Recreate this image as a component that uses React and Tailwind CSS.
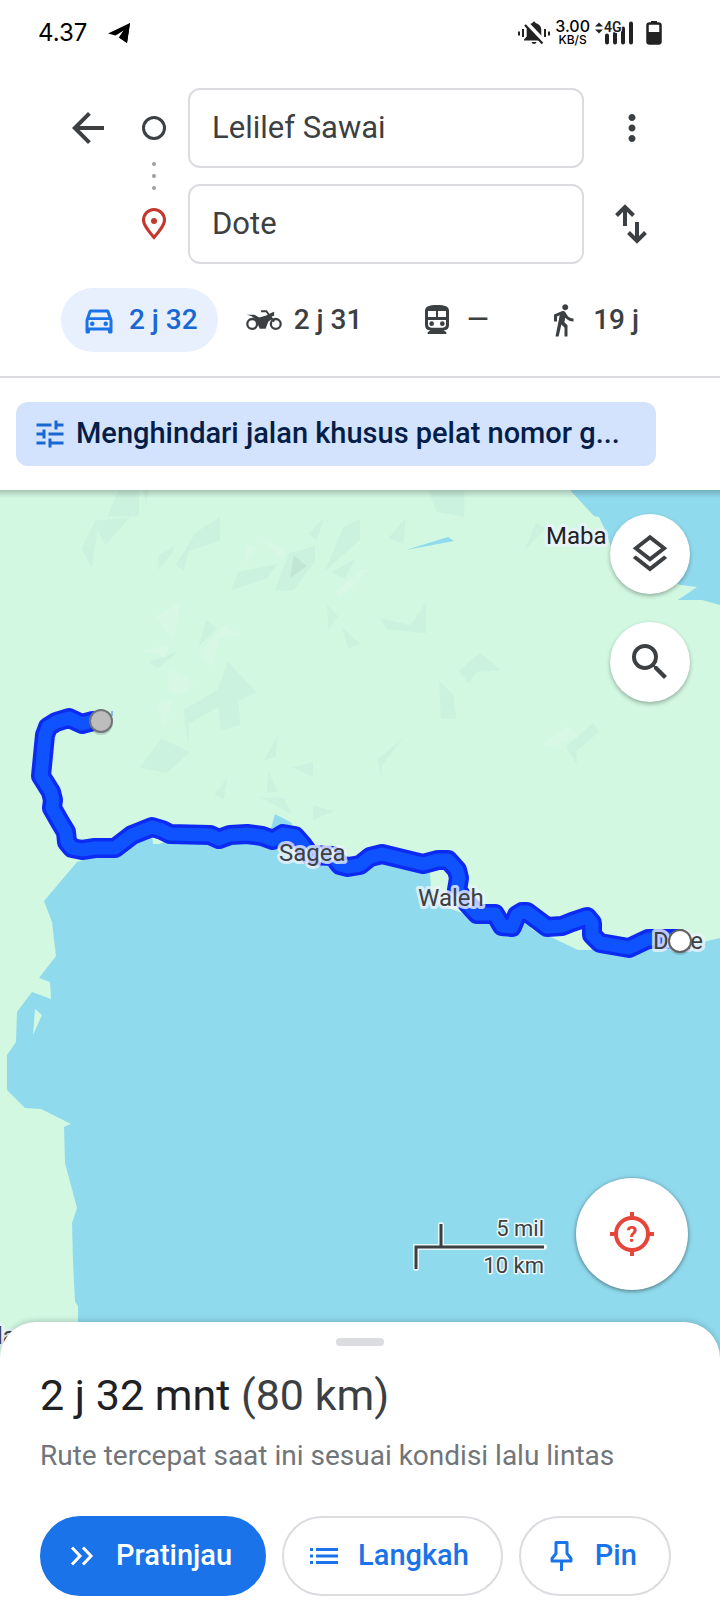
import React from "react";
import {
  MdArrowBack,
  MdDirectionsWalk,
  MdMoreVert,
  MdOutlineDirectionsCar,
  MdOutlineLayers,
  MdSearch,
  MdTune,
} from "react-icons/md";

function StatusBar() {
  return (
    <div className="flex h-16 items-center justify-between pt-0.5 pr-[58px] pl-[38px] text-black">
      <div className="flex items-center gap-5">
        <span className="font-['Inter','Roboto',sans-serif] text-2xl">4.37</span>
        <svg className="h-[22px] w-6" viewBox="0 0 24 22" aria-label="Telegram">
          <path d="M1 11.5 23 1 20 21 12 15.5 17 8 8.5 13.5z" fill="#000" />
          <path d="M8.5 13.5 17 8l-5 7.5 8 5.5 3-20z" fill="#000" />
        </svg>
      </div>
      <div className="flex items-center gap-[5px] text-[#222]">
        <svg className="h-6 w-8" viewBox="0 0 32 24" aria-label="Getar">
          <path d="M14.500 2a1.500 1.500 0 0 1 3 0c3.500.9 5.800 3.500 5.800 7v6.500l2.700 3v1H6v-1l2.700-3V9c0-3.500 2.300-6.100 5.800-7z" fill="#222" />
          <path d="M13.500 21h5q-.5 2-2.500 2t-2.500-2z" fill="#222" />
          <path d="M8 2 27 22" stroke="#fff" strokeWidth="5" />
          <path d="M7 4 24.500 22.500" stroke="#222" strokeWidth="2.200" />
          <path d="M5 8v8M27 8v8M1 10.500v4M31 10.500v4" stroke="#222" strokeWidth="2" />
        </svg>
        <div className="text-center font-['Inter','Roboto',sans-serif] text-xs leading-3 font-medium text-black">
          <span className="text-base leading-[13px]">3.00</span>
          <br />
          KB/S
        </div>
        <svg className="h-6 w-[42px]" viewBox="0 0 42 24" aria-label="4G">
          <path d="M0 5.500 4 1.500l4 4zM0 8.500l4 4 4-4z" fill="#222" />
          <path d="M12 14.500v7M20 12.500v9M28 7.500v14M36 2.500v19" stroke="#222" strokeWidth="4" strokeLinecap="round" />
          <text x="9" y="11" fontFamily="Roboto, sans-serif" fontWeight="600" fontSize="14" fill="#222" stroke="#fff" strokeWidth="2" paintOrder="stroke">4G</text>
        </svg>
        <svg className="ml-1 h-6 w-4" viewBox="0 0 16 24" aria-label="Baterai">
          <path d="M5 0h6v2H5z" fill="#222" />
          <rect x="1.500" y="2.500" width="13" height="20" rx="2" fill="#fff" stroke="#222" strokeWidth="2.500" />
          <path d="M1 11h14v11H1z" fill="#222" />
        </svg>
      </div>
    </div>
  );
}

function SwapIcon() {
  return (
    <svg className="h-10 w-10" viewBox="0 0 40 40" fill="none" stroke="#3c4043" strokeWidth="4" aria-hidden="true">
      <path d="M13 22V4M4.500 11.500 13 3l8.500 8.500M25 18v18M16.500 28.500 25 37l8.500-8.500" />
    </svg>
  );
}

function MotorcycleIcon() {
  return (
    <svg className="h-9 w-9" viewBox="0 -24 110 110" aria-hidden="true">
      <g fill="none" stroke="#3c4043">
        <circle cx="19" cy="43" r="15" strokeWidth="7" />
        <circle cx="91" cy="43" r="15" strokeWidth="7" />
        <path d="M46 4h16l24 32" strokeWidth="6" />
      </g>
      <path d="M2 15h24l14 8 22-6 16-8 8-3v12l-8 2 2 8-12 8-8 22H42l-6-14-8-16-12-9z" fill="#3c4043" />
    </svg>
  );
}

function TrainIcon() {
  return (
    <svg className="h-9 w-9" viewBox="-18 -9 108 108" aria-hidden="true">
      <path d="M0 18C0 4 12 0 36 0s36 4 36 18v42q0 16-16 16l8 6v5H8v-5l8-6Q0 76 0 60z" fill="#3c4043" />
      <path d="M9 18h24v18H9zM39 18h24v18H39zM9 45h54v13q0 10-10 10H19Q9 68 9 58z" fill="#fff" />
      <circle cx="20" cy="56" r="7" fill="#3c4043" />
      <circle cx="52" cy="56" r="7" fill="#3c4043" />
    </svg>
  );
}

const FIELD =
  "h-20 w-full rounded-xl border-2 border-[#dadce0] bg-white px-[22px] pb-0.5 text-[31px] text-[#3c4043] outline-none";

function RouteForm() {
  return (
    <div className="flex pt-6 pr-10 pl-16">
      <button type="button" aria-label="Kembali" className="flex h-20 w-12 shrink-0 items-center justify-center text-[#3c4043]">
        <MdArrowBack size={48} />
      </button>
      <div className="ml-2 flex w-[68px] shrink-0 flex-col items-center">
        <svg className="h-20 w-7" viewBox="0 0 28 80" aria-hidden="true">
          <circle cx="14" cy="40" r="10.500" fill="none" stroke="#3c4043" strokeWidth="3" />
          <circle cx="14" cy="76" r="2" fill="#9aa0a6" />
        </svg>
        <svg className="h-4 w-7" viewBox="0 0 28 16" aria-hidden="true">
          <circle cx="14" cy="8" r="2" fill="#9aa0a6" />
        </svg>
        <svg className="h-20 w-7" viewBox="0 0 28 80" aria-hidden="true">
          <circle cx="14" cy="4" r="2" fill="#9aa0a6" />
          <path d="M14 53.500C8 46.500 3.500 41 3.500 36a10.500 10.500 0 0 1 21 0c0 5-4.500 10.500-10.500 17.500z" fill="none" stroke="#c5372c" strokeWidth="3" />
          <circle cx="14" cy="37" r="3" fill="#c5372c" />
        </svg>
      </div>
      <div className="flex min-w-0 flex-1 flex-col gap-4">
        <input aria-label="Titik awal" defaultValue="Lelilef Sawai" className={FIELD} />
        <input aria-label="Tujuan" defaultValue="Dote" className={FIELD} />
      </div>
      <div className="flex w-24 shrink-0 flex-col gap-4 text-[#3c4043]">
        <button type="button" aria-label="Opsi lainnya" className="flex h-20 items-center justify-center">
          <MdMoreVert size={42} />
        </button>
        <button type="button" aria-label="Tukar awal dan tujuan" className="flex h-20 items-center justify-center">
          <SwapIcon />
        </button>
      </div>
    </div>
  );
}

function TravelModes() {
  const tab = "flex h-16 items-center justify-center gap-3 rounded-full px-5 text-[28px] font-medium whitespace-nowrap";
  return (
    <div role="tablist" className="flex gap-2 border-b-2 border-[#dadce0] px-[61px] py-6">
      <button type="button" role="tab" aria-selected="true" aria-label="Mobil 2 j 32" className={tab + " bg-[#e8f0fe] text-[#1967d2]"}>
        <MdOutlineDirectionsCar size={36} color="#1a73e8" />
        2 j 32
      </button>
      <button type="button" role="tab" aria-selected="false" aria-label="Motor 2 j 31" className={tab + " text-[#3c4043]"}>
        <MotorcycleIcon />
        2 j 31
      </button>
      <button type="button" role="tab" aria-selected="false" aria-label="Transportasi umum" className={tab + " flex-1 text-[#3c4043]"}>
        <TrainIcon />
        —
      </button>
      <button type="button" role="tab" aria-selected="false" aria-label="Jalan kaki 19 j" className={tab + " text-[#3c4043]"}>
        <MdDirectionsWalk size={36} />
        19 j
      </button>
    </div>
  );
}

const ROUTE =
  "M101 721 93 721 82 724 69 718 56 722 48 727 45 735 41 776 51 792 53 800 52 808 60 822 66 832 67 842 72 848 82 850 95 848 115 848 132 835 152 827 162 830 170 834 210 835 219 839 230 835 247 834 262 836 273 840 283 834 295 836 302 844 310 855 333 856 340 865 348 867 360 865 370 857 382 854 423 864 438 860 448 860 457 870 459 878 457 890 467 903 477 914 495 914 502 926 512 927 517 915 522 912 527 912 547 927 562 926 572 922 587 917 592 923 592 935 600 943 629 948 648 939 680 939";

function MapDrawing() {
  return (
    <svg
      className="absolute inset-0 h-full w-full"
      viewBox="0 490 720 872"
      preserveAspectRatio="xMidYMid slice"
      role="img"
      aria-label="Peta rute Lelilef Sawai ke Dote"
    >
      <rect y="490" width="720" height="872" fill="#d2f8e2" />
      <g transform="translate(0 480) scale(0.33333)" fill="#cbf2de">
        <path d="M355 30h62v80h-95l28-66zM428 30h20l-10 42zM285 122l105-10-73 84-25-44-17 110-30-54zM660 112v70l-95 32-12 58-27-16 62-100zM525 197l-48 28-2 46 40-50zM715 275l117-22-32 42-106 36zM868 220l77-22v46l-65 88h-57zM973 112l-48 50 26 18zM1030 140l50-24v64l-104 92zM1066 238l-72 38 40 20zM981 374l33 34-28 40zM1024 440l22 66 34-14zM618 420l34 24-56 56zM536 513l-90 34 28 18zM684 545l86 92-56 26 8 72-60 16-6-70-90 50v64l-16-104 102-62zM484 775l86 42-70 62-80-16zM833 766l-42 76 36-12zM876 862l63-16v44zM806 876l28 60-34 2zM780 952l70 2 28 50zM939 974l62 20-62 26zM683 890l-40 54 28 14z" />
        <path d="M881 226l40 32-50 36z" fill="#c1e6d3" />
        <path d="M543 366l-75 42 52 74zM740 190l28 16-36 50zM784 177l73 30-8 36zM672 437l55 28-70 8-22 90-38-46zM425 513l82-18-10 36zM508 567l74 38-40 42-40-18zM518 660l-50 18 28 60zM1080 272l-76 66 14 16 62-52z" fill="#d8f8e5" />
      </g>
      <g transform="translate(360 480) scale(0.33333)" fill="#cbf2de">
        <path d="M205 30h108v80l-82-14zM137 114l-52 60 45 18zM528 129l30 14-66 70zM60 414l92 22 46-70v94l-118-12zM360 518l62 52-70 6-26 34-30-38zM238 604l42 42 10 70h-48zM132 770l-80 70 15 56-3-38zM700 729l18 26-68 58v40l-32-54z" />
        <path d="M620 740l40 26-72 30h-42zM30 266l-30 28v-26z" fill="#d8f8e5" />
      </g>
      <g fill="#90daee">
        <path d="M570 490 594 516 599 517 606 532 612 550 680 585 697 587 678 600 702 600 720 605V490z" />
        <path d="M406 550 448 537 454 541z" />
        <path d="M275 814 292 823 289 834 270 832z" />
        <path d="M77 862 44 901 52 922 56 956 39 978 50 982 51 999 32 992 17 1012 16 1042 7 1055V1090L25 1108 41 1109 71 1124 64 1127 65 1163 77 1208 72 1223 73 1262 75 1302 78 1306V1362H720V938L707 941 690 948 578 950 553 938 532 930 524 918 495 925 440 905 431 889 430 866 382 858 350 866 310 850 273 840 152 834 115 850z" />
      </g>
      <path d="M35 1009 42 1015 33 1035zM152 833h13v9l-6 2h-6zM430 862h20l8 26-10 10-17-8z" fill="#d2f8e2" />
      <path d={ROUTE} fill="none" stroke="#0d2af2" strokeWidth="20" strokeLinejoin="round" strokeLinecap="round" />
      <path d={ROUTE} fill="none" stroke="#0f53ff" strokeWidth="13" strokeLinejoin="round" strokeLinecap="round" />
      <path d="M112 711v5" stroke="#3f7fe8" strokeWidth="1" />
      <g
        fontFamily="Roboto, sans-serif"
        fontSize="24"
        fill="#3c4043"
        stroke="#ecf3fd"
        strokeOpacity="0.8"
        strokeWidth="6"
        strokeLinejoin="round"
        paintOrder="stroke"
      >
        <text x="546" y="544" fill="#202124">Maba</text>
        <text x="279" y="861">Sagea</text>
        <text x="418" y="906">Waleh</text>
        <text x="653" y="949">Dote</text>
        <text x="-3" y="1344">la</text>
      </g>
      <circle cx="101" cy="723" r="12" fill="#000" opacity="0.15" />
      <circle cx="101" cy="721" r="11" fill="#bdbdbd" stroke="#70757a" strokeWidth="2" />
      <circle cx="680" cy="943" r="12" fill="#000" opacity="0.15" />
      <circle cx="680" cy="941" r="11" fill="#fff" stroke="#616161" strokeWidth="2" />
    </svg>
  );
}

function ScaleBar() {
  return (
    <svg className="h-[60px] w-[136px]" viewBox="412 1217 136 60" role="img" aria-label="Skala 5 mil, 10 km">
      <path d="M416 1267v-21h128M441 1224v21" fill="none" stroke="#fff" strokeOpacity="0.8" strokeWidth="6" strokeLinecap="round" />
      <path d="M416 1268v-22h128M441 1223v22" fill="none" stroke="#3c4043" strokeWidth="3" />
      <g fontFamily="Roboto, sans-serif" fontSize="22" fill="#3c4043" stroke="#fff" strokeOpacity="0.85" strokeWidth="3" strokeLinejoin="round" paintOrder="stroke" textAnchor="end">
        <text x="544" y="1235">5 mil</text>
        <text x="544" y="1272">10 km</text>
      </g>
    </svg>
  );
}

function MapPanel() {
  const fab =
    "flex h-20 w-20 items-center justify-center rounded-full bg-white text-[#3c4043] shadow-[0_2px_4px_rgba(0,0,0,0.3)]";
  return (
    <section className="relative min-h-[600px] flex-1 overflow-hidden">
      <MapDrawing />
      <div className="absolute inset-x-0 top-0 h-2 bg-linear-to-b from-black/20 to-transparent" />
      <div className="absolute top-6 right-[30px] flex flex-col gap-7">
        <button type="button" aria-label="Lapisan peta" className={fab}>
          <MdOutlineLayers size={46} />
        </button>
        <button type="button" aria-label="Telusuri" className={fab}>
          <MdSearch size={48} />
        </button>
      </div>
      <div className="absolute right-8 bottom-[72px] flex items-end gap-7">
        <div className="pb-3">
          <ScaleBar />
        </div>
        <button
          type="button"
          aria-label="Lokasi saya"
          className="flex h-28 w-28 items-center justify-center rounded-full bg-white shadow-[0_1px_4px_rgba(0,0,0,0.5)]"
        >
          <svg className="h-11 w-11" viewBox="0 0 44 44" aria-hidden="true">
            <circle cx="22" cy="22" r="16" fill="none" stroke="#e6453a" strokeWidth="4" />
            <path d="M22 0v6M22 38v6M0 22h6M38 22h6" stroke="#e6453a" strokeWidth="4" />
            <text x="22" y="30" textAnchor="middle" fontFamily="Roboto, sans-serif" fontWeight="700" fontSize="22" fill="#e6453a">?</text>
          </svg>
        </button>
      </div>
    </section>
  );
}

function RouteSheet() {
  const button = "flex h-20 items-center gap-5 rounded-full border-2 pr-8 pl-[26px] text-[29px] font-medium";
  const outlined = button + " border-[#dadce0] text-[#1a73e8]";
  return (
    <section className="relative -mt-10 rounded-t-[36px] bg-white px-10 pt-4 pb-4 shadow-[0_-1px_6px_rgba(0,0,0,0.2)]">
      <div className="mx-auto h-2 w-12 rounded-full bg-[#dadce0]" />
      <h1 className="mt-6 text-[43px] leading-[50px] text-[#202124]">
        2 j 32 mnt <span className="text-[#3c4043]">(80 km)</span>
      </h1>
      <p className="mt-4 text-[28px] leading-10 text-[#70757a]">Rute tercepat saat ini sesuai kondisi lalu lintas</p>
      <div className="mt-10 flex gap-4">
        <button type="button" className={button + " border-[#1a73e8] bg-[#1a73e8] text-white"}>
          <svg className="h-7 w-7" viewBox="0 0 28 28" fill="none" stroke="#fff" strokeWidth="3" aria-hidden="true">
            <path d="M4 5.500 12 14l-8 8.500M15 5.500 23 14l-8 8.500" />
          </svg>
          Pratinjau
        </button>
        <button type="button" className={outlined}>
          <svg className="h-7 w-7" viewBox="0 0 28 28" stroke="#1a73e8" strokeWidth="3" aria-hidden="true">
            <path d="M0 7.500h3M6 7.500h22M0 14h3M6 14h22M0 20.500h3M6 20.500h22" />
          </svg>
          Langkah
        </button>
        <button type="button" className={outlined}>
          <svg className="h-8 w-7" viewBox="0 0 28 32" fill="none" stroke="#1a73e8" strokeWidth="3" strokeLinejoin="round" aria-hidden="true">
            <path d="M9 2.500h11v11l4 5V21H5v-2.500l4-5zM14.500 21v10" />
          </svg>
          Pin
        </button>
      </div>
    </section>
  );
}

export default function App() {
  return (
    <main className="flex min-h-screen flex-col bg-white font-['Roboto','Open_Sans',sans-serif]">
      <header>
        <StatusBar />
        <RouteForm />
        <TravelModes />
        <div className="py-6 pr-16 pl-4">
          <button
            type="button"
            className="flex h-16 w-full items-center gap-2 rounded-xl bg-[#d3e3fd] px-4 text-left text-[29px] font-medium text-[#041e49]"
          >
            <MdTune size={36} color="#1967d2" className="shrink-0" />
            <span className="truncate">Menghindari jalan khusus pelat nomor g...</span>
          </button>
        </div>
      </header>
      <MapPanel />
      <RouteSheet />
    </main>
  );
}
